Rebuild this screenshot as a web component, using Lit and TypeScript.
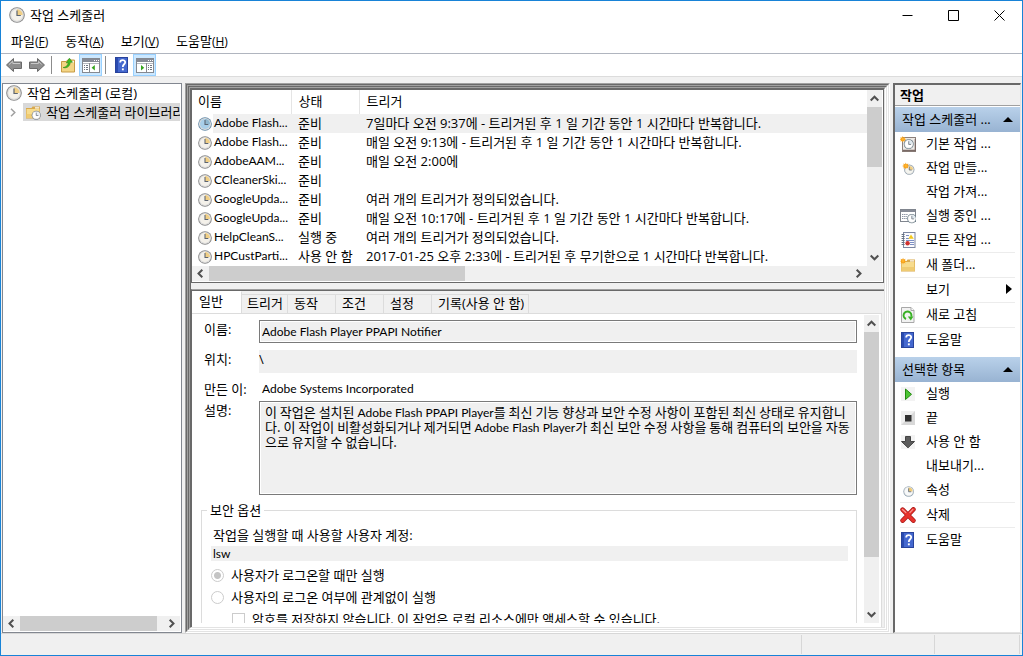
import { LitElement, html, css, svg, nothing, TemplateResult } from "lit";
import { customElement, property } from "lit/decorators.js";
import { classMap } from "lit/directives/class-map.js";

const clockShape = (face = "#f4f1ea", wedge = "#f0cf86", rim = "#858585") => svg`
  <circle cx="8" cy="8" r="7.8" fill="${rim}"/>
  <circle cx="8" cy="8" r="6.9" fill="#dcdcdc"/>
  <circle cx="8" cy="8" r="5.7" fill="${face}"/>
  <path d="M8 8V2.3A5.7 5.7 0 0 1 13.7 8Z" fill="${wedge}"/>
  <path d="M8 3.4V8.5H11.8" fill="none" stroke="#5c6470" stroke-width="1.2"/>`;

const star = svg`<path d="M4.5 0.5l1 2.4 2.4-1-.8 2.3 2.4 1-2.4 1 .8 2.4-2.4-1-1 2.3-1-2.3-2.4 1 .8-2.4-2.3-1 2.3-1-.8-2.3 2.4 1z" fill="#f7a21b"/><circle cx="4.6" cy="5" r="1.6" fill="#ffb52e"/>`;

const folder = svg`
  <path d="M1 4h5.5l1-1.5H15v12H1z" fill="#d9a94c"/>
  <path d="M1.6 5h12.8v9H1.6z" fill="#f7dc8e"/>
  <path d="M10 3.3h4.2v1.2H10z" fill="#fff"/>
  <path d="M1.6 10h12.8v4H1.6z" fill="#efcb72"/>`;

const windowFrame = svg`
  <rect x="0.5" y="1.5" width="17" height="14" fill="#fff" stroke="#858990"/>
  <rect x="1" y="2" width="16" height="3" fill="#868b96"/>
  <path d="M1 6.5h16" stroke="#b5b9c0"/>
  <path d="M12 3.5h1M14 3.5h1M16 3.5h1" stroke="#fff"/>`;

const ICONS: Record<string, { box: string; art: TemplateResult | unknown }> = {
  clock: { box: "0 0 16 16", art: clockShape() },
  clockBlue: { box: "0 0 16 16", art: clockShape("#a9cfe9", "#8fb7cf", "#5f87a6") },
  back: {
    box: "0 0 16 16",
    art: svg`<path d="M.5 8L7.5 1.5V5H15.5V11.500H7.500V14.500Z" fill="#8e8e8e" stroke="#6a6a6a"/><path d="M3 7.6L6.8 4.2V6.5H14" fill="none" stroke="#c9c9c9"/>`,
  },
  forward: {
    box: "0 0 16 16",
    art: svg`<path d="M15.5 8L8.5 1.5V5H.5V11.500H8.500V14.500Z" fill="#8e8e8e" stroke="#6a6a6a"/><path d="M2 6.5H9.4V4.4L12.6 7.4" fill="none" stroke="#c9c9c9"/>`,
  },
  folderUp: {
    box: "0 0 16 16",
    art: svg`<path d="M1.5 4.5h5l1-1.5H14.5V15H1.5z" fill="#f3d585" stroke="#c79b45"/><path d="M10 4.2h4v1.2h-4z" fill="#fff"/>
      <path d="M3.2 10.5C6 10.3 7.6 8.8 8.4 5.6L6.3 5.9 9.4 1.2 12.4 5.2 10.3 5.3C9.8 9.4 7 11.6 3.2 10.5Z" fill="#3fc023" stroke="#23860f" stroke-width=".6"/>`,
  },
  paneLeft: {
    box: "0 0 18 16",
    art: svg`${windowFrame}<path d="M7.5 6v9" stroke="#858990"/><path d="M2 8.500h1M4 8.500h2M2 10.500h1M4 10.500h2M2 12.500h1M4 12.500h2" stroke="#6f7784"/><path d="M12.800 8v5.600L9.600 10.800z" fill="#35a51d"/>`,
  },
  paneRight: {
    box: "0 0 18 16",
    art: svg`${windowFrame}<path d="M10.5 6v9" stroke="#858990"/><path d="M12 8.500h1M14 8.500h2M12 10.500h1M14 10.500h2M12 12.500h1M14 12.500h2" stroke="#6f7784"/><path d="M5 8v5.600l3.200-2.800z" fill="#35a51d"/>`,
  },
  help: {
    box: "0 0 16 16",
    art: svg`<rect x="1.5" y=".5" width="12" height="15" fill="#4468cf" stroke="#28439c"/><path d="M2 1h2v14H2z" fill="#2a4bb0"/>
      <path d="M6.2 5.4C6.2 2.4 11.2 2.3 11.2 5.3 11.2 7.4 8.8 7.2 8.8 10" fill="none" stroke="#fff" stroke-width="1.8"/><rect x="7.9" y="11.4" width="1.9" height="1.9" fill="#fff"/>`,
  },
  library: { box: "0 0 16 16", art: svg`${folder}<g transform="translate(6.6 6.6) scale(.58)">${clockShape("#fff", "#e8eef4", "#6b7785")}</g>` },
  basic: {
    box: "0 0 16 16",
    art: svg`<rect x="2.5" y="1.5" width="13" height="14" fill="#eeeae6" stroke="#8b7f7a"/><path d="M3 14.5H15.5V3" fill="none" stroke="#7a6a66" stroke-width="1.6"/>
      <g transform="translate(3.6 3) scale(.64)">${clockShape("#fff", "#dfe9ef", "#5f7683")}</g><g transform="translate(-.4 -.4) scale(.7)">${star}</g>`,
  },
  create: { box: "0 0 16 16", art: svg`<g transform="translate(4 4.4) scale(.66)">${clockShape("#f4f4ee", "#f0cf86", "#8a9aa6")}</g><g transform="translate(2.4 2) scale(.75)">${star}</g>` },
  running: {
    box: "0 0 16 16",
    art: svg`<rect x=".5" y="1.5" width="15" height="12" fill="#fff" stroke="#80858e"/><path d="M1 3h14" stroke="#868b96" stroke-width="2"/>
      <path d="M2 6.5h6M2 8.5h5M2 10.5h5" stroke="#8a93a3" stroke-dasharray="1.4 .7"/><g transform="translate(7 5.8) scale(.6)">${clockShape("#fff", "#dfe9ef", "#5f7683")}</g>`,
  },
  history: {
    box: "0 0 16 16",
    art: svg`<rect x="3.5" y=".5" width="11.5" height="15" fill="#fbfbfd" stroke="#7c86a0"/><path d="M1.6 2.5h3M1.6 4.5h3M1.6 6.5h3M1.6 8.5h3M1.6 10.5h3M1.6 12.5h3" stroke="#66707f"/>
      <path d="M6 3.5h3M6 6.5h3M10 10.5h4M10 12.5h4M6 8.5h8" stroke="#7d8fc4"/><path d="M11 2.4l2.8 4.4H8.4z" fill="#f2c81d"/><circle cx="7.6" cy="11.3" r="2.2" fill="#d0312d"/>`,
  },
  newFolder: { box: "0 0 16 16", art: svg`${folder}<g transform="translate(-.2 .4) scale(.72)">${star}</g>` },
  refresh: {
    box: "0 0 16 16",
    art: svg`<path d="M1.5.5h9.5l3 3V15.5h-12.500z" fill="#f2f2f2" stroke="#a8a8a8"/><path d="M11 .5v3h3" fill="#fff" stroke="#a8a8a8"/>
      <path d="M6 12A3.9 3.9 0 1 1 11.2 9.6" fill="none" stroke="#38b024" stroke-width="2"/><path d="M7.8 9.6H13.4L10.800 13.600z" fill="#38b024"/>`,
  },
  run: { box: "0 0 16 16", art: svg`<rect x="1" y="1" width="14" height="14" fill="#f3f3f3"/><path d="M5.500 3v10.500l6-5.200z" fill="#4cc534" stroke="#23890f"/>` },
  stop: { box: "0 0 16 16", art: svg`<rect x="1" y="1" width="14" height="14" fill="#d8d8d8"/><path d="M1 1h14L1 15z" fill="#efefef"/><rect x="5" y="5" width="6.500" height="6.500" fill="#303030"/>` },
  disable: { box: "0 0 16 16", art: svg`<rect x="1" y="1" width="14" height="14" fill="#f3f3f3"/><path d="M5.500 2.500h5v5h4L8 13.800 1.500 7.500h4z" fill="#5b5b5b" stroke="#444"/>` },
  props: { box: "0 0 16 16", art: svg`<g transform="translate(3.200 4) scale(.68)">${clockShape("#f7f9fa", "#efcb78", "#92a5b4")}</g>` },
  remove: {
    box: "0 0 16 16",
    art: svg`<path d="M2.600 2.600L13.400 13.600M13.400 2.400L2.600 13.600" stroke="#a61717" stroke-width="4.600" stroke-linecap="round"/><path d="M2.600 2.600L13.400 13.600M13.400 2.400L2.600 13.600" stroke="#e8332c" stroke-width="3.200" stroke-linecap="round"/><path d="M2.200 2.200l4 3.600M13.200 2.200l-3.600 3.600" stroke="#f79c96" stroke-width="1.200"/>`,
  },
};

const icon = (name: string, size = 16, width = size) =>
  html`<svg class="icon" width=${width} height=${size} viewBox=${ICONS[name].box} aria-hidden="true">${ICONS[name].art}</svg>`;

const text = css`
  * { box-sizing: border-box; }
  button, input { font: inherit; color: inherit; margin: 0; padding: 0; border: 0; border-radius: 0; background: none; outline: none; text-align: left; }
  .icon { display: block; flex: none; }
  .latin { font-family: Lato, "Noto Sans CJK KR", sans-serif; font-size: 12px; }
  ul { list-style: none; margin: 0; padding: 0; }
`;

@customElement("scroll-track")
class ScrollTrack extends LitElement {
  @property({ reflect: true }) direction = "vertical";
  @property({ type: Number }) start = 0;
  @property({ type: Number }) size = 50;
  static styles = css`
    :host { display: flex; flex: none; background: #f0f0f0; }
    :host([direction="vertical"]) { flex-direction: column; width: 15px; }
    :host([direction="horizontal"]) { height: 15px; }
    .arrow { flex: none; width: 17px; height: 15px; display: grid; place-items: center; }
    :host([direction="vertical"]) .arrow { width: 15px; height: 17px; }
    .lane { flex: 1; display: flex; min-width: 0; min-height: 0; }
    :host([direction="vertical"]) .lane { flex-direction: column; }
    .thumb { background: #cdcdcd; flex: none; }
  `;
  render() {
    const v = this.direction === "vertical";
    const arrow = (d: string) => html`<span class="arrow"><svg width="9" height="9" viewBox="0 0 9 9"><path d=${d} fill="none" stroke="#505050" stroke-width="2"/></svg></span>`;
    const dim = (n: number) => (v ? `height:${n}%` : `width:${n}%`);
    return html`${arrow(v ? "M.7 6.500L4.500 2.700 8.300 6.500" : "M6.300 .7L2.500 4.500 6.300 8.300")}
      <div class="lane"><div style=${dim(this.start)}></div><div class="thumb" style=${dim(this.size)}></div></div>
      ${arrow(v ? "M.7 2.500L4.500 6.300 8.300 2.500" : "M2.700 .7L6.500 4.500 2.700 8.300")}`;
  }
}

const TASKS = [
  ["Adobe Flash...", "준비", "7일마다 오전 9:37에 - 트리거된 후 1 일 기간 동안 1 시간마다 반복합니다."],
  ["Adobe Flash...", "준비", "매일 오전 9:13에 - 트리거된 후 1 일 기간 동안 1 시간마다 반복합니다."],
  ["AdobeAAM...", "준비", "매일 오전 2:00에"],
  ["CCleanerSki...", "준비", ""],
  ["GoogleUpda...", "준비", "여러 개의 트리거가 정의되었습니다."],
  ["GoogleUpda...", "준비", "매일 오전 10:17에 - 트리거된 후 1 일 기간 동안 1 시간마다 반복합니다."],
  ["HelpCleanS...", "실행 중", "여러 개의 트리거가 정의되었습니다."],
  ["HPCustParti...", "사용 안 함", "2017-01-25 오후 2:33에 - 트리거된 후 무기한으로 1 시간마다 반복합니다."],
];

@customElement("task-list")
class TaskList extends LitElement {
  static styles = [text, css`
    :host { display: flex; flex-direction: column; background: #fff; }
    .main { display: flex; }
    .rows { flex: 1; min-width: 0; overflow: hidden; }
    table { border-collapse: collapse; table-layout: fixed; width: 100%; }
    .name { width: 99px; }
    .state { width: 68px; }
    th { height: 24px; padding: 0 6px 2px; border-right: 1px solid #e5e5e5; text-align: left; font-weight: 400; line-height: 20px; }
    th:last-child { border-right: 0; }
    th:not(:first-child) { padding-left: 7px; }
    td { height: 19px; padding: 0 0 1px 7px; line-height: 18px; white-space: nowrap; }
    td:first-child { padding: 0; }
    .cell { display: flex; align-items: center; }
    .cell .icon { margin: 0 1px 0 6px; }
    .label { height: 19px; line-height: 18px; padding-left: 1px; flex: 1; }
    .selected td:not(:first-child), .selected .label { background: #f0f0f0; }
    scroll-track[direction="horizontal"] { padding-right: 15px; }
  `];
  render() {
    return html`<div class="main">
        <div class="rows"><table>
          <thead><tr><th class="name">이름</th><th class="state">상태</th><th>트리거</th></tr></thead>
          <tbody>${TASKS.map((t, i) => html`<tr class=${classMap({ selected: i === 0 })}>
            <td><div class="cell">${icon(i ? "clock" : "clockBlue", 14)}<span class="label latin">${t[0]}</span></div></td>
            <td>${t[1]}</td><td>${t[2]}</td></tr>`)}</tbody>
        </table></div>
        <scroll-track direction="vertical" start="0" size="42"></scroll-track>
      </div>
      <scroll-track direction="horizontal" start="0" size="40"></scroll-track>`;
  }
}

@customElement("task-details")
class TaskDetails extends LitElement {
  static styles = [text, css`
    :host { display: flex; flex-direction: column; min-height: 0; background: #f0f0f0; }
    .tabs { display: flex; align-items: flex-end; height: 23px; flex: none; border-top: 1px solid #696969; }
    .tab { height: 19px; width: 48px; padding: 0 6px 2px; border: 1px solid #dcdcdc; border-left: 0; border-bottom: 0; white-space: nowrap; line-height: 16px; }
    .tab.active { height: 22px; width: 50px; padding: 0 7px 3px; background: #fff; border-color: #fff; border-right-color: #dcdcdc; }
    .tab.first { width: 46px; padding: 0 5px 2px; }
    .tab.wide { width: auto; padding: 0 4px 2px 6px; }
    .page { flex: 1; min-height: 0; display: flex; margin-right: 2px; border-top: 1px solid #dcdcdc; border-right: 1px solid #dcdcdc; padding: 1px 2px 4px 0; background: #fff; }
    .form { flex: 1; min-width: 0; overflow: hidden; padding: 5px 7px 0 9px; }
    .row { display: grid; grid-template-columns: 58px 1fr; margin-bottom: 7px; }
    .row label, .row .caption { padding-left: 3px; line-height: 19px; }
    .field { width: 100%; height: 23px; background: #f0f0f0; padding: 0 2px; line-height: 16px; display: block; }
    .boxed { border: 1px solid #7a7a7a; box-shadow: inset 0 0 0 1px #fff; }
    .flat { padding: 0 0 6px; }
    .area { height: 94px; padding: 2px 5px; font-family: "Noto Sans CJK KR", sans-serif; line-height: 15px; white-space: nowrap; overflow: hidden; }
    .area .latin { line-height: 1px; }
    .row .caption, .author { line-height: 18px; }
    .author { padding-left: 3px; }
    .last { margin-bottom: 6px; }
    .tight { margin-bottom: 3px; }
    fieldset { margin: 0; padding: 6px 8px 0 9px; border: 1px solid #dcdcdc; min-width: 0; height: 180px; }
    legend { padding: 0 3px; margin-left: -4px; line-height: 18px; }
    .account { display: block; padding-left: 2px; line-height: 20px; }
    .user { width: 100%; height: 15px; background: #f0f0f0; padding: 0 2px; display: block; line-height: 15px; margin-top: 1px; }
    .choice { display: flex; align-items: center; gap: 7px; height: 22px; }
    .first-choice { margin-top: 3px; }
    .choice input { appearance: none; width: 13px; height: 13px; border: 1px solid #ccc; background: #fff; flex: none; }
    .choice input[type="radio"] { border-radius: 50%; }
    .choice input[type="radio"]:checked { background: radial-gradient(circle, #c4c4c4 0 3px, #fff 4px); }
    .nested { padding-left: 21px; }
  `];
  render() {
    return html`<div class="tabs" role="tablist">
        <button class="tab active" role="tab" aria-selected="true">일반</button>
        <button class="tab first" role="tab">트리거</button><button class="tab" role="tab">동작</button>
        <button class="tab" role="tab">조건</button><button class="tab" role="tab">설정</button>
        <button class="tab wide" role="tab">기록(사용 안 함)</button>
      </div>
      <div class="page">
        <div class="form">
          <div class="row"><label for="name">이름:</label><input id="name" class="field boxed latin" readonly .value=${"Adobe Flash Player PPAPI Notifier"}></div>
          <div class="row"><label for="place">위치:</label><input id="place" class="field flat" readonly .value=${"\\"}></div>
          <div class="row tight"><span class="caption">만든 이:</span><span class="author latin">Adobe Systems Incorporated</span></div>
          <div class="row last"><label for="desc">설명:</label><output id="desc" class="field boxed area">이 작업은 설치된 <span class="latin">Adobe Flash PPAPI Player</span>를 최신 기능 향상과 보안 수정 사항이 포함된 최신 상태로 유지합니<br>다. 이 작업이 비활성화되거나 제거되면 <span class="latin">Adobe Flash Player</span>가 최신 보안 수정 사항을 통해 컴퓨터의 보안을 자동<br>으로 유지할 수 없습니다.</output></div>
          <fieldset><legend>보안 옵션</legend>
            <label class="account" for="user">작업을 실행할 때 사용할 사용자 계정:</label>
            <input id="user" class="user latin" readonly .value=${"lsw"}>
            <label class="choice first-choice"><input type="radio" name="logon" checked disabled>사용자가 로그온할 때만 실행</label>
            <label class="choice"><input type="radio" name="logon" disabled>사용자의 로그온 여부에 관계없이 실행</label>
            <label class="choice nested"><input type="checkbox" disabled>암호를 저장하지 않습니다. 이 작업은 로컬 리소스에만 액세스할 수 있습니다.</label>
          </fieldset>
        </div>
        <scroll-track direction="vertical" start="0" size="82"></scroll-track>
      </div>`;
  }
}

type Action = { text: string; icon?: string; line?: boolean; more?: boolean };
const GROUPS: { title: string; items: Action[] }[] = [
  { title: "작업 스케줄러 ...", items: [
    { text: "기본 작업 ...", icon: "basic" }, { text: "작업 만들...", icon: "create" }, { text: "작업 가져..." },
    { text: "실행 중인 ...", icon: "running" }, { text: "모든 작업 ...", icon: "history", line: true },
    { text: "새 폴더...", icon: "newFolder", line: true }, { text: "보기", line: true, more: true },
    { text: "새로 고침", icon: "refresh", line: true }, { text: "도움말", icon: "help" },
  ] },
  { title: "선택한 항목", items: [
    { text: "실행", icon: "run" }, { text: "끝", icon: "stop" }, { text: "사용 안 함", icon: "disable" }, { text: "내보내기..." },
    { text: "속성", icon: "props", line: true }, { text: "삭제", icon: "remove", line: true }, { text: "도움말", icon: "help" },
  ] },
];

@customElement("action-pane")
class ActionPane extends LitElement {
  static styles = [text, css`
    :host { display: block; box-sizing: border-box; background: #fff; border: 1px solid #e3e3e3; border-top: 2px solid #696969; border-left: 2px solid #696969; }
    .title { margin: 0; height: 21px; background: #f0f0f0; border-bottom: 1px solid #a0a0a0; font-size: 13px; font-weight: 700; line-height: 20px; padding-left: 5px; }
    .group { margin-top: 1px; }
    .group + .group { margin-top: 5px; }
    .head { width: 100%; height: 25px; padding: 0 7px 1px; display: flex; align-items: center; justify-content: space-between; background: linear-gradient(#b9d1ea, #98b3d2); white-space: nowrap; }
    li { padding: 0 5px; }
    .item { width: 100%; height: 24px; padding: 0 3px 2px 0; display: flex; align-items: center; white-space: nowrap; }
    .slot { width: 16px; margin-right: 10px; padding-top: 2px; flex: none; }
    .grow { flex: 1; }
    .rule { height: 1px; background: #ececec; }
  `];
  render() {
    return html`<h2 class="title">작업</h2>${GROUPS.map((g) => html`<section class="group">
      <button class="head">${g.title}<svg width="10" height="5" viewBox="0 0 10 5"><path d="M5 0l5 5H0z"/></svg></button>
      <ul>${g.items.map((a) => html`<li><button class="item">
        <span class="slot">${a.icon ? icon(a.icon) : nothing}</span><span class="grow">${a.text}</span>
        ${a.more ? html`<svg width="6" height="10" viewBox="0 0 6 10"><path d="M0 0l6 5-6 5z"/></svg>` : nothing}
      </button>${a.line ? html`<div class="rule"></div>` : nothing}</li>`)}</ul></section>`)}`;
  }
}

@customElement("app-root")
class AppRoot extends LitElement {
  static styles = [text, css`
    :host { display: flex; flex-direction: column; height: 100vh; box-sizing: border-box; border: 1px solid #1883d7; background: #f0f0f0; color: #000; font: 13px/18px "Open Sans", "Noto Sans CJK KR", sans-serif; overflow: hidden; }
    .titlebar { display: flex; align-items: center; height: 28px; background: #fff; padding-left: 8px; flex: none; }
    .caption { margin: 0 0 0 5px; font-size: 13px; font-weight: 400; flex: 1; }
    .control { width: 46px; height: 28px; display: grid; place-items: center; }
    .menu { display: flex; gap: 17px; height: 25px; padding: 0 10px; align-items: center; background: #fff; border-bottom: 1px solid #b0b5bf; flex: none; }
    .key { font-size: 12px; }
    .tools { display: flex; align-items: center; height: 23px; background: #fff; border-bottom: 1px solid #dcdcdc; padding-left: 1px; flex: none; }
    .tool { width: 23px; height: 23px; display: grid; place-items: center; }
    .tool.on { background: #cce8ff; border: 1px solid #99d1ff; height: 22px; }
    .rule { width: 1px; height: 18px; background: #8c8c8c; margin: 0 4px 0 3px; }
    .body { flex: 1; min-height: 0; display: flex; padding: 6px 1px 0 1px; }
    .tree { width: 180px; display: flex; flex-direction: column; background: #fff; border: 1px solid #828790; padding: 0 1px 1px 0; margin-right: 3px; flex: none; }
    .nodes { flex: 1; overflow: hidden; }
    .node { display: flex; align-items: center; width: 100%; height: 18px; margin-bottom: 1px; white-space: nowrap; }
    .node .icon { margin: 0 5px 0 3px; }
    .twisty { width: 6px; margin: 0 3px 0 7px; flex: none; }
    .leaf { display: flex; align-items: center; background: #d9d9d9; height: 18px; margin-left: 4px; flex: 1; }
    .leaf .icon { margin-left: 2px; }
    .bevel { display: flex; flex: 1; min-width: 0; min-height: 0; border: 1px solid; border-color: #a0a0a0 #fff #fff #a0a0a0; }
    .bevel.deep { border-color: #696969 #e3e3e3 #e3e3e3 #696969; }
    .stack { flex: 1; min-width: 0; display: flex; flex-direction: column; }
    task-list { flex: none; border: 1px solid #696969; padding: 0 1px 1px 0; }
    task-details { flex: 1; margin-top: 6px; border-top: 1px solid #a0a0a0; border-left: 1px solid #696969; }
    action-pane { width: 128px; margin-left: 3px; flex: none; }
    .status { display: flex; height: 22px; flex: none; border-top: 1px solid #d7d7d7; padding: 1px 2px 1px 0; }
    .part { border-right: 1px solid #d7d7d7; width: 133px; }
    .part.main { width: auto; flex: 1; }
    .part.end { width: 85px; }
  `];
  render() {
    const glyph = (d: string) => html`<svg width="11" height="11" viewBox="0 0 11 11"><path d=${d} fill="none" stroke="#000"/></svg>`;
    const menus = [["파일", "F"], ["동작", "A"], ["보기", "V"], ["도움말", "H"]];
    const center = html`<div class="stack"><task-list></task-list><task-details></task-details></div>`;
    return html`
      <header class="titlebar">${icon("clock", 16)}<h1 class="caption">작업 스케줄러</h1>
        <button class="control" aria-label="최소화">${glyph("M.5 5.500h10")}</button>
        <button class="control" aria-label="최대화">${glyph("M.5 .5h10v10h-10z")}</button>
        <button class="control" aria-label="닫기">${glyph("M.5 .5l10 10M10.500 .5l-10 10")}</button>
      </header>
      <nav class="menu">${menus.map(([t, k]) => html`<button>${t}<span class="key">(<u>${k}</u>)</span></button>`)}</nav>
      <div class="tools">
        <button class="tool" aria-label="뒤로">${icon("back")}</button><button class="tool" aria-label="앞으로">${icon("forward")}</button>
        <span class="rule"></span>
        <button class="tool" aria-label="위로">${icon("folderUp")}</button><button class="tool on" aria-label="트리">${icon("paneLeft", 16, 18)}</button>
        <span class="rule"></span>
        <button class="tool" aria-label="도움말">${icon("help")}</button><button class="tool on" aria-label="작업 창">${icon("paneRight", 16, 18)}</button>
      </div>
      <main class="body">
        <div class="tree">
          <ul class="nodes">
            <li><button class="node">${icon("clock", 16)}작업 스케줄러 (로컬)</button></li>
            <li><button class="node"><svg class="twisty" width="6" height="9" viewBox="0 0 6 9"><path d="M1 .7L4.800 4.500 1 8.300" fill="none" stroke="#a0a0a0" stroke-width="1.500"/></svg><span class="leaf">${icon("library", 16)}작업 스케줄러 라이브러리</span></button></li>
          </ul>
          <scroll-track direction="horizontal" start="0" size="96"></scroll-track>
        </div>
        <div class="bevel"><div class="bevel deep"><div class="bevel"><div class="bevel deep"><div class="bevel"><div class="bevel deep">${center}</div></div></div></div></div></div>
        <action-pane></action-pane>
      </main>
      <footer class="status"><span class="part main"></span><span class="part"></span><span class="part end"></span></footer>`;
  }
}
